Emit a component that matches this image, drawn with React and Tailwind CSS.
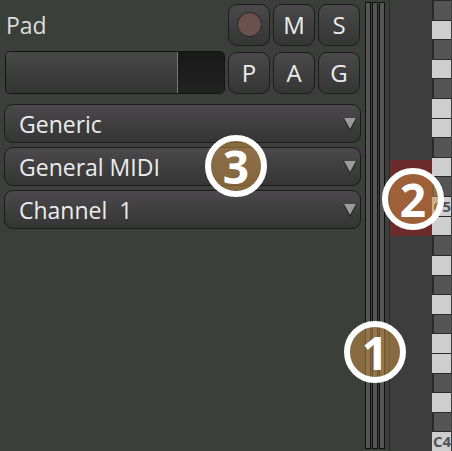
import React from 'react';

const KEYS = 'dldldlldldCldldldlldldL'.split('');

const ToolButton = ({ children }) => (
  <button className="flex h-[42px] w-[42px] items-center justify-center rounded-[9px] border border-[#1c1c1c] bg-gradient-to-b from-[#4b494b] to-[#353535] text-[24px] text-[#ececec]">
    {children}
  </button>
);

const Dropdown = ({ label }) => (
  <div className="flex h-[39px] items-center justify-between rounded-[9px] border border-[#1c1c1c] bg-gradient-to-b from-[#4b494b] to-[#353535] pl-[14px] pr-[3px] text-[23px] text-[#ececec]">
    <span className="whitespace-pre pt-[2px]">{label}</span>
    <svg width="14" height="14" viewBox="0 0 14 14">
      <polygon points="0,1 14,1 7,14" fill="#1f1f1f" />
      <polygon points="1,1 13,1 7,12" fill="#9a9a9a" />
    </svg>
  </div>
);

const Badge = ({ n, className }) => (
  <div className={`absolute flex h-[62px] w-[62px] items-center justify-center rounded-full border-[6px] border-white bg-[#d19547]/50 text-[46px] font-bold leading-none text-white ${className}`}>
    {n}
  </div>
);

const PianoKey = ({ type, next }) => {
  if (type === 'd') {
    return <div className="flex-1 border-y border-l-2 border-[#2a2a2a] bg-[#555555]" />;
  }
  const label = type === 'L' ? 'C4' : type === 'C' ? 'C5' : null;
  return (
    <div className={`flex flex-1 items-center overflow-hidden bg-[#cecece] pl-[1px] text-[15px] font-bold leading-none text-[#4f5358] ${next && next !== 'd' ? 'border-b border-[#2a2a2a]' : ''}`}>
      {label}
    </div>
  );
};

export default function App() {
  return (
    <div className="relative flex h-[451px] w-[452px] overflow-hidden bg-[#3b3f39] font-['Open_Sans','Noto_Sans',sans-serif]">
      {/* Track controls */}
      <div className="w-[365px] shrink-0 pl-[4px] pr-[4px] pt-[3px]">
        <div className="flex h-[43px] items-center justify-between pr-[1px]">
          <span className="pl-[2px] pt-[1px] text-[23px] text-[#dcdcdc]">Pad</span>
          <div className="flex gap-[3px]">
            <ToolButton>
              <span className="h-[25px] w-[25px] rounded-full border border-[#262626] bg-[#6b5050]" />
            </ToolButton>
            <ToolButton>M</ToolButton>
            <ToolButton>S</ToolButton>
          </div>
        </div>
        <div className="mt-[5px] flex items-center justify-between pr-[1px]">
          <div className="ml-[1px] flex h-[43px] w-[220px] overflow-hidden rounded-[5px] border border-[#141414]">
            <div className="w-[172px] border-r border-[#787878] bg-gradient-to-b from-[#484848] to-[#333333]" />
            <div className="flex-1 bg-gradient-to-b from-[#191919] to-[#222222]" />
          </div>
          <div className="flex gap-[3px]">
            <ToolButton>P</ToolButton>
            <ToolButton>A</ToolButton>
            <ToolButton>G</ToolButton>
          </div>
        </div>
        <div className="mt-[10px] flex flex-col gap-[4px]">
          <Dropdown label="Generic" />
          <Dropdown label="General MIDI" />
          <Dropdown label="Channel  1" />
        </div>
      </div>

      {/* Level meters */}
      <div className="flex w-[24px] shrink-0 gap-[1px] py-[2px]">
        <div className="w-[6px] border border-[#111111] bg-[#555555]" />
        <div className="w-[6px] border border-[#111111] bg-[#555555]" />
        <div className="w-[6px] border border-[#111111] bg-[#555555]" />
      </div>

      {/* Note lane */}
      <div className="relative flex-1 border-l border-[#2c2c2c] bg-[#3d3d3d]">
        <div className="absolute inset-x-0 top-[160px] h-[76px] bg-[#6b2b2b]" />
      </div>

      {/* Piano keys */}
      <div className="flex w-[20px] shrink-0 flex-col bg-[#3d3d3d] pr-[1px]">
        {KEYS.map((k, i) => (
          <PianoKey key={i} type={k} next={KEYS[i + 1]} />
        ))}
      </div>

      <Badge n="3" className="left-[205px] top-[135px]" />
      <Badge n="2" className="left-[382px] top-[168px]" />
      <Badge n="1" className="left-[344px] top-[321px]" />
    </div>
  );
}
